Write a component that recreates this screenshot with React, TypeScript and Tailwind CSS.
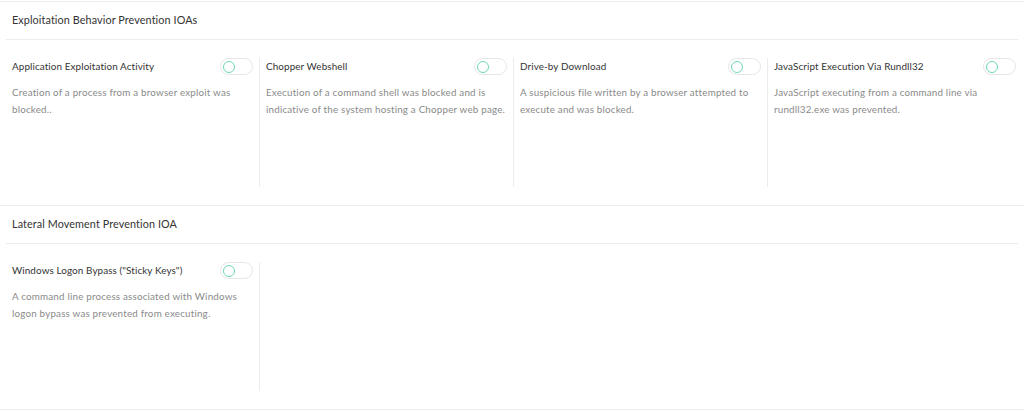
import React from "react";

type Item = { title: string; desc: string };

const sections: { heading: string; items: Item[] }[] = [
  {
    heading: "Exploitation Behavior Prevention IOAs",
    items: [
      {
        title: "Application Exploitation Activity",
        desc: "Creation of a process from a browser exploit was blocked..",
      },
      {
        title: "Chopper Webshell",
        desc: "Execution of a command shell was blocked and is indicative of the system hosting a Chopper web page.",
      },
      {
        title: "Drive-by Download",
        desc: "A suspicious file written by a browser attempted to execute and was blocked.",
      },
      {
        title: "JavaScript Execution Via Rundll32",
        desc: "JavaScript executing from a command line via rundll32.exe was prevented.",
      },
    ],
  },
  {
    heading: "Lateral Movement Prevention IOA",
    items: [
      {
        title: 'Windows Logon Bypass ("Sticky Keys")',
        desc: "A command line process associated with Windows logon bypass was prevented from executing.",
      },
    ],
  },
];

function Toggle() {
  return (
    <div className="flex h-[17px] w-[33px] shrink-0 items-center rounded-full border border-[#e6e6e6] bg-white pl-[2px]">
      <div className="h-[12px] w-[12px] rounded-full border-[1.5px] border-[#6dd9b1] bg-white" />
    </div>
  );
}

function Card({ item, last }: { item: Item; last: boolean }) {
  return (
    <div
      className={`h-[129px] px-[6px] ${last ? "" : "border-r border-[#ececec]"}`}
    >
      <div className="flex items-center justify-between">
        <div className="text-[9.9px] leading-[17px] tracking-[0.1px] text-[#333]">
          {item.title}
        </div>
        <Toggle />
      </div>
      <p className="mt-[9px] text-[9.8px] leading-[16.5px] tracking-[0.2px] text-[#8a8a8a]">
        {item.desc}
      </p>
    </div>
  );
}

export default function App() {
  return (
    <div
      className="w-[1024px] bg-white pt-[1px]"
      style={{ fontFamily: "Lato, 'Open Sans', sans-serif" }}
    >
      {sections.map((s, i) => (
        <section
          key={i}
          className={`border-t border-[#ececec] ${i === sections.length - 1 ? "border-b" : ""}`}
        >
          <div className="mx-[6px] flex h-[38px] items-center border-b border-[#ececec] px-[6px]">
            <h2 className="text-[10.8px] tracking-[0.1px] text-[#333]">
              {s.heading}
            </h2>
          </div>
          <div className="grid grid-cols-[254px_254px_254px_254px] px-[6px] py-[18px]">
            {s.items.map((it, j) => (
              <Card key={j} item={it} last={j === 3} />
            ))}
          </div>
        </section>
      ))}
    </div>
  );
}
